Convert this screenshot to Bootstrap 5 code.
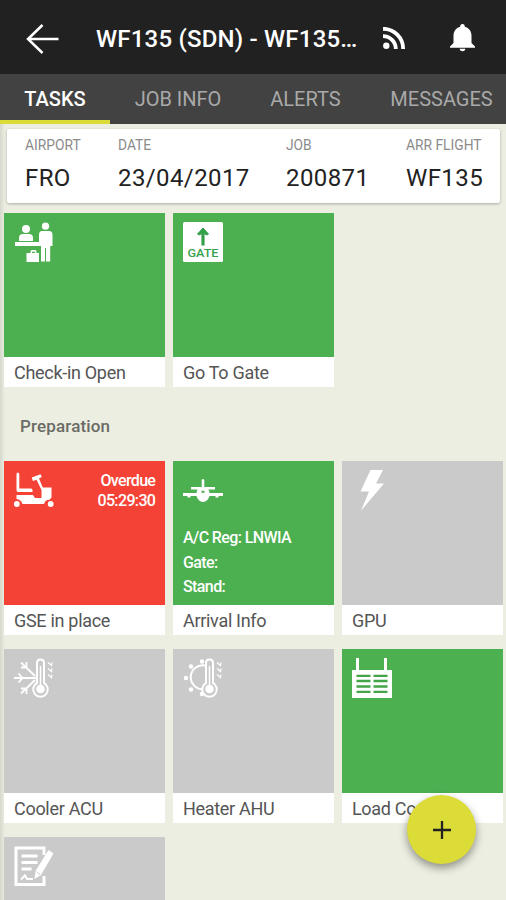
<!DOCTYPE html>
<html lang="en">
<head>
<meta charset="utf-8">
<meta name="viewport" content="width=device-width, initial-scale=1">
<title>WF135 tasks</title>
<link href="https://cdn.jsdelivr.net/npm/bootstrap@5.3.0/dist/css/bootstrap.min.css" rel="stylesheet">
<style>
html, body { height: 900px; overflow: hidden; }
body { background: #eceee1; font-family: Roboto, "Liberation Sans", sans-serif; color: #222; line-height: 1; }
.app { height: 900px; overflow: hidden; }
.topbar { height: 74px; background: #212121; padding: 4px 30px 0 25px; }
.topbar h1 { font-size: 24px; font-weight: 500; line-height: 30px; margin-left: 37px; width: 263px; white-space: nowrap; letter-spacing: .2px; }
.bell { margin-left: 43px; }
.tabs { height: 50px; background: #424242; }
.tabs .nav-link { color: #a9a9a9; font-size: 20px; line-height: 20px; padding: 15px 0 11px; height: 50px; border-bottom: 4px solid transparent; white-space: nowrap; text-align: center; }
.tabs .nav-link.active { color: #fff; font-weight: 500; border-color: #dcdc39; }
.t1 { width: 110px; } .t2 { width: 136px; } .t3 { width: 119px; } .t4 { width: 141px; padding-left: 12px !important; }
.body-area { height: 776px; padding-top: 5px; background: linear-gradient(90deg, #d5d8cc, #eceee1 5px); }
.flight { margin: 0 6px 0 7px; height: 74px; border-radius: 2px; background: #fff; box-shadow: 0 1px 3px rgba(0,0,0,.28); padding: 9px 0 0 18px; grid-template-columns: 93px 168px 120px 1fr; }
.flight dt { font-size: 13.8px; line-height: 14px; font-weight: 400; color: #8b8b8b; margin-bottom: 14px; }
.flight dd { font-size: 24px; line-height: 24px; margin: 0; color: #222; letter-spacing: .4px; white-space: nowrap; }
.tiles { grid-template-columns: repeat(3, 161.3px); column-gap: 7.7px; row-gap: 14px; margin-left: 4px; }
.first-row { margin-top: 10px; }
.tile { height: 174px; background: #fff; }
.face { height: 144px; padding: 9px 10px; color: #fff; font-size: 16px; font-weight: 500; }
.face svg { width: 40px; height: 40px; display: block; }
.green { background: #4caf50; } .red { background: #f44336; } .gray { background: #cacaca; }
.caption-line { font-size: 18px; line-height: 30px; padding: 1px 10px 0; height: 30px; color: #555; white-space: nowrap; letter-spacing: -.3px; }
.section-name { font-size: 17px; line-height: 20px; font-weight: 500; color: #6a6b66; margin: 29px 0 25px 20px; letter-spacing: .15px; }
.late { line-height: 20px; font-size: 16px; padding-top: 1px; letter-spacing: -.65px; }
.arrival { line-height: 24.5px; padding-top: 16px; letter-spacing: -.6px; }
.fab { left: 407px; top: 795px; width: 69px; height: 69px; background: #dcdc39; box-shadow: 0 4px 8px rgba(0,0,0,.4); }
</style>
<script src="https://cdn.jsdelivr.net/npm/bootstrap@5.3.0/dist/js/bootstrap.bundle.min.js"></script>
</head>
<body>
<div class="app position-relative">
  <header class="topbar d-flex align-items-center text-white">
    <svg width="34" height="32" viewBox="0 0 34 32" fill="none" stroke="#fff" stroke-width="2.500" aria-label="Back"><path d="M33.500 16H3M17.500 2L3 16l14.500 14"/></svg>
    <h1 class="mb-0">WF135 (SDN) - WF135…</h1>
    <svg class="ms-auto" width="24" height="24" viewBox="0 0 24 24" fill="none" stroke="#fff" stroke-width="3.800"><circle cx="4.300" cy="18.700" r="3.200" fill="#fff" stroke="none"/><path d="M1 9.200a12.800 12.800 0 0 1 12.800 12.800M1 1.800a20.200 20.200 0 0 1 20.200 20.200"/></svg>
    <svg class="bell" width="27" height="30" viewBox="0 0 27 30" fill="#fff"><path d="M13.500 0c1.600 0 2.300 1 2.300 2.800 4.300 1.100 6.700 4.700 6.700 9V19l3.500 3.500v1.300H1v-1.300L4.500 19v-7.200c0-4.300 2.400-7.900 6.700-9C11.200 1 11.900 0 13.500 0zM10.700 24.800h5.600a2.800 2.400 0 0 1-5.600 0z"/></svg>
  </header>
  <nav class="tabs nav flex-nowrap">
    <a class="nav-link active t1">TASKS</a>
    <a class="nav-link t2">JOB INFO</a>
    <a class="nav-link t3">ALERTS</a>
    <a class="nav-link t4">MESSAGES</a>
  </nav>
  <main class="body-area">
    <dl class="flight d-grid">
      <div><dt>AIRPORT</dt><dd>FRO</dd></div>
      <div><dt>DATE</dt><dd>23/04/2017</dd></div>
      <div><dt>JOB</dt><dd>200871</dd></div>
      <div><dt>ARR FLIGHT</dt><dd>WF135</dd></div>
    </dl>
    <section class="tiles d-grid first-row">
      <article class="tile"><div class="face green">
        <svg viewBox="0 0 40 40" fill="#fff"><circle cx="12" cy="7" r="4"/><path d="M5 19v-3q0-4 4-4h6q4 0 4 4v3zM1 20h25v4H1z"/><circle cx="31.500" cy="4.200" r="3.600"/><path d="M28 9h7q3.500 0 3.500 4v11h-2.300v15.500H32V26h-1v13.500h-4V24h-2V13q0-4 3-4zM12.500 31h4v-1.500q0-1.500 1.500-1.500h3q1.500 0 1.500 1.500V31H25v9H12.500zm5.500 0h3v-1.200h-3z"/></svg>
      </div><div class="caption-line">Check-in Open</div></article>
      <article class="tile"><div class="face green">
        <svg viewBox="0 0 40 40"><rect width="40" height="40" rx="1.500" fill="#fff"/><path d="M20 7v10.500M20 17.500v6" stroke="#35a04a" stroke-width="3.200" stroke-dasharray="11 1"/><path d="M20 6l5.500 6-1.500 1-4-2-4 2-1.500-1z" fill="#35a04a" stroke="#35a04a"/><text x="4.500" y="35.300" textLength="31" lengthAdjust="spacingAndGlyphs" font-family="Roboto, sans-serif" font-size="11.800" fill="#35a04a">GATE</text></svg>
      </div><div class="caption-line">Go To Gate</div></article>
    </section>
    <h2 class="section-name">Preparation</h2>
    <section class="tiles d-grid">
      <article class="tile"><div class="face red d-flex justify-content-between align-items-start">
        <svg viewBox="0 0 40 40" fill="#fff"><path d="M2.500 4q0-1.500 1.300-1.500T5.300 4v14.500H17q1.500 0 1.500 1.800v1.700H4q-1.500 0-1.500-2zM17.700 7.500l8.800-3.300 1.300 2.800-2.800 1.500 3.800 9H37.500v10l-2 2.300q-4-.3-5.500 4.200H8.500q-1.500-4.500-6-5V25H19l2 3h6.500v-8l-5-10.200-3.600 1.200z"/><circle cx="2.800" cy="34" r="2.900"/><circle cx="36.700" cy="34" r="2.900"/></svg>
        <div class="late text-end">Overdue<br>05:29:30</div>
      </div><div class="caption-line">GSE in place</div></article>
      <article class="tile"><div class="face green">
        <svg viewBox="0 0 40 40" fill="#fff"><path fill-rule="evenodd" d="M18.700 10q1.300-2 2.600 0v7H32v2.500h-6.500q1 2 1 3.500H40v3h-4.500v1.500h-3V26h-6q-1.500 5.500-6.500 6-5-.5-6.500-6h-6v1.500h-3V26H0v-3h13.500q0-1.500 1-3.500H8V17h10.700zM18.500 20.800h3v2h-3z"/></svg>
        <div class="arrival">A/C Reg: LNWIA<br>Gate:<br>Stand:</div>
      </div><div class="caption-line">Arrival Info</div></article>
      <article class="tile"><div class="face gray">
        <svg viewBox="0 0 40 40" fill="#fff"><path d="M18.500 0H31l-7 13.500h8L9.200 40.500 17 21.500H8.500z"/></svg>
      </div><div class="caption-line">GPU</div></article>
      <article class="tile"><div class="face gray">
        <svg viewBox="0 0 40 40" fill="none" stroke="#fff" stroke-width="2"><path d="M0 20h22M4.500 15.500L8.500 20l-4 4.500M21 18L7 4.500M7 9.500h5.500V4M21 22L7 35.500M7 30.500h5.500V36" stroke-width="1.800"/><path d="M23 25V5q0-3.500 3.500-3.500T30 5v20a7.300 7.300 0 1 1-7 0z" fill="#cacaca"/><path d="M26.500 8v22" stroke-width="1.500"/><circle cx="26.500" cy="31" r="4.300" fill="#fff" stroke="none"/><path d="M34 4.500l3.500 3 .5-3M34 10.500l3.500 3 .5-3M34 16.500l3.500 3 .5-3" stroke-width="1.200"/></svg>
      </div><div class="caption-line">Cooler ACU</div></article>
      <article class="tile"><div class="face gray">
        <svg viewBox="0 0 40 40" fill="none" stroke="#fff" stroke-width="2"><path d="M24 8A12 12 0 1 0 22 31"/><g fill="#fff" stroke="none"><circle cx="3" cy="20" r="2.200"/><circle cx="8" cy="8.500" r="2.200"/><circle cx="8" cy="31.500" r="2.200"/><circle cx="19" cy="3.500" r="2.200"/><circle cx="19" cy="36" r="2.200"/></g><path d="M23 25V5q0-3.500 3.500-3.500T30 5v20a7.300 7.300 0 1 1-7 0z" fill="#cacaca"/><path d="M26.500 8v22" stroke-width="1.500"/><circle cx="26.500" cy="31" r="4.300" fill="#fff" stroke="none"/><path d="M34 4.500l3.500 3 .5-3M34 10.500l3.500 3 .5-3M34 16.500l3.500 3 .5-3" stroke-width="1.200"/></svg>
      </div><div class="caption-line">Heater AHU</div></article>
      <article class="tile"><div class="face green">
        <svg viewBox="0 0 40 40"><path d="M0 12h4V0h3v12h25V0h3v12h5v28H0z" fill="#fff"/><path d="M4.500 17.800h14M21.500 17.800h14M4.500 23h14M21.500 23h14M4.500 28.500h14M21.500 28.500h14M4.500 33.800h14M21.500 33.800h14" stroke="#43a548" stroke-width="2.300"/></svg>
      </div><div class="caption-line">Load Control</div></article>
      <article class="tile"><div class="face gray">
        <svg viewBox="0 0 40 40" fill="none" stroke="#fff" stroke-width="3.200"><path d="M30 9V2H2v36.500h28V30M7.500 10h16M7.500 16.500h16M7.500 23h10" stroke-width="3"/><path d="M7 33.500l4-4 2 3.500h6" stroke-width="2"/><path d="M34.500 4l5 3.500L27 29l-6.500 4 1-8z" fill="#fff" stroke="none"/><path d="M22.500 25.500l3.500 3" stroke="#cacaca" stroke-width="1"/></svg>
      </div><div class="caption-line"></div></article>
    </section>
  </main>
  <button class="fab position-absolute rounded-circle border-0 p-0 d-flex align-items-center justify-content-center" aria-label="Add">
    <svg width="18" height="18" viewBox="0 0 18 18" stroke="#222" stroke-width="2.300"><path d="M9 0v18M0 9h18"/></svg>
  </button>
</div>
</body>
</html>
